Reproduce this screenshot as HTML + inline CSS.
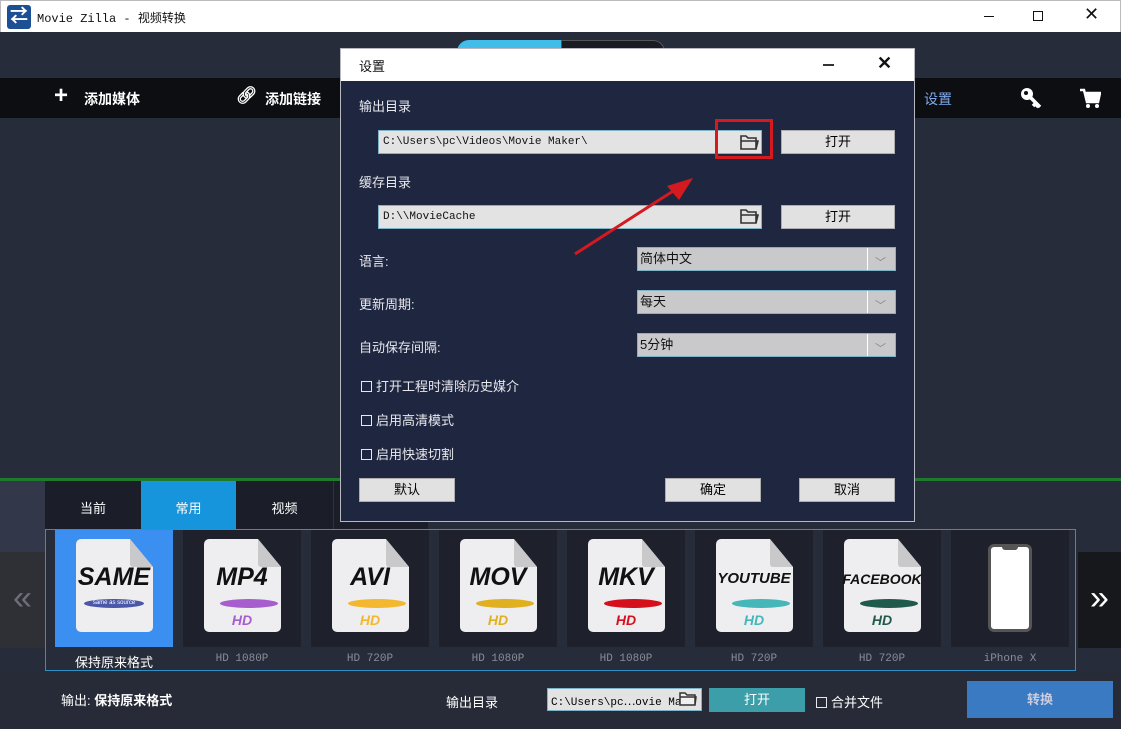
<!DOCTYPE html>
<html><head><meta charset="utf-8"><style>
*{margin:0;padding:0;box-sizing:border-box}
body{width:1121px;height:729px;overflow:hidden;position:relative;background:#272c3b;font-family:"Liberation Sans","Noto Sans CJK SC",sans-serif;font-size:13px}
.abs{position:absolute}
.mono{font-family:"Liberation Mono","Noto Sans CJK SC",monospace}
.title{left:0;top:0;width:1121px;height:32px;background:#fff;border-top:1px solid #bbb;border-left:1px solid #bbb;border-right:1px solid #bbb}
.tb{left:0;top:78px;width:1121px;height:40px;background:#0d0e12;color:#fff;font-weight:bold;font-size:14px}
.card{position:absolute;top:530px;width:118px;height:117px;background:#1e212c}
.doc{position:absolute;left:21px;top:9px;width:77px;height:93px;background:#eeeef0;border-radius:5px;clip-path:polygon(0 0,70% 0,100% 30%,100% 100%,0 100%)}
.fold{position:absolute;left:75px;top:9px;width:23px;height:28px;background:#c9c9cc;clip-path:polygon(0 0,100% 100%,0 100%);border-radius:0 0 0 3px}
.fmt{position:absolute;left:0;width:118px;top:33px;text-align:center;font-weight:bold;font-style:italic;font-size:25px;color:#111;font-family:"Liberation Sans",sans-serif}
.pill{position:absolute;left:37px;top:69px;width:58px;height:9px;border-radius:50%}
.hd{position:absolute;left:0;width:118px;top:82px;text-align:center;font-weight:bold;font-style:italic;font-size:14px}
.lbl{position:absolute;top:653px;width:118px;text-align:center;color:#8a8d96;font-size:11px}
.btn{position:absolute;background:#e1e1e1;border:1px solid #adadad;color:#000;text-align:center;font-size:13px}
.inp{position:absolute;background:#e3e3e3;border:1px solid #7eb4c8;color:#111;font-size:11px;padding-left:4px}
.sel{position:absolute;background:#c9c9cb;border:1px solid #7eb4c8;color:#111;font-size:13px;padding-left:2px}
.sel i{position:absolute;right:27px;top:0;width:1px;height:100%;background:#fff}
.sel b{position:absolute;right:9px;top:4px;color:#888;font-weight:normal;font-size:11px}
.dl{position:absolute;color:#e8e8ee;font-size:13px}
.cb{display:inline-block;width:11px;height:11px;border:1px solid #e8e8e8;margin-right:4px;vertical-align:-1px}
.fold-ic{position:absolute}
</style></head><body>
<div class="abs title">
 <div class="abs" style="left:6px;top:4px;width:24px;height:24px;background:#1d4f95;border-radius:3px;color:#fff;font-size:18px;line-height:22px;text-align:center;font-weight:bold">⇄</div>
 <div class="abs mono" style="left:36px;top:8px;font-size:12px;color:#111">Movie Zilla - 视频转换</div>
 <div class="abs" style="left:983px;top:15px;width:10px;height:1px;background:#111"></div>
 <div class="abs" style="left:1032px;top:10px;width:10px;height:10px;border:1px solid #111"></div>
 <div class="abs" style="left:1083px;top:3px;font-size:18px;color:#111">✕</div>
</div>
<div class="abs" style="left:457px;top:40px;width:104px;height:14px;background:#41bde9;border-radius:12px 0 0 0"></div>
<div class="abs" style="left:561px;top:40px;width:104px;height:14px;background:#1a1c23;border-radius:0 12px 0 0;border:1px solid #555"></div>
<div class="abs tb">
 <div class="abs" style="left:54px;top:6px;font-size:24px;font-weight:bold;line-height:24px">+</div>
 <div class="abs" style="left:84px;top:11px">添加媒体</div>
 <div class="abs" style="left:236px;top:8px;font-size:17px">🔗︎</div>
 <div class="abs" style="left:265px;top:11px">添加链接</div>
 <div class="abs" style="left:924px;top:11px;color:#7fa8e8;font-weight:normal">设置</div>
 <svg class="abs" style="left:1019px;top:8px" width="24" height="24" viewBox="0 0 24 24"><circle cx="8" cy="8" r="6" fill="#fff"/><circle cx="7" cy="7" r="2" fill="#0d0e12"/><path d="M11 11 L21 21 M17 17 L14 20 M19 19 L17 21" stroke="#fff" stroke-width="3.5"/></svg>
 <svg class="abs" style="left:1079px;top:9px" width="22" height="22" viewBox="0 0 22 22"><path d="M1 3 H5 L8 15 H19 L21 6 H6" fill="none" stroke="#fff" stroke-width="2.5"/><path d="M7 7 H20 L18 14 H9Z" fill="#fff"/><circle cx="9" cy="19" r="2" fill="#fff"/><circle cx="18" cy="19" r="2" fill="#fff"/></svg>
</div>
<div class="abs" style="left:0;top:478px;width:1121px;height:3px;background:#1f7a2e"></div>
<div class="abs" style="left:0;top:481px;width:45px;height:72px;background:#323849"></div>
<div class="abs" style="left:45px;top:481px;width:96px;height:49px;background:#1b1e28;color:#fff;text-align:center;line-height:56px">当前</div>
<div class="abs" style="left:141px;top:481px;width:95px;height:49px;background:#1695dd;color:#fff;text-align:center;line-height:56px">常用</div>
<div class="abs" style="left:236px;top:481px;width:97px;height:49px;background:#1b1e28;color:#fff;text-align:center;line-height:56px">视频</div>
<div class="abs" style="left:333px;top:481px;width:95px;height:49px;background:#1b1e28;border-left:1px solid #333"></div>
<div class="abs" style="left:0;top:552px;width:45px;height:96px;background:#2f3036;color:#6c6f78;font-size:34px;text-align:center;line-height:92px">«</div>
<div class="abs" style="left:1078px;top:552px;width:43px;height:96px;background:#17181c;color:#fff;font-size:34px;text-align:center;line-height:92px">»</div>
<div class="abs" style="left:45px;top:529px;width:1031px;height:142px;border:1px solid #2f8fc7"></div>

<div class="card" style="left:55px;background:#3b8ff0"><div class="doc"></div><div class="fold"></div><div class="fmt">SAME</div><div class="pill" style="background:#4b57a8;left:29px;width:60px"></div><div class="abs" style="left:0;width:118px;top:70px;font-size:6px;color:#fff;text-align:center">same as source</div></div>
<div class="card" style="left:183px"><div class="doc"></div><div class="fold"></div><div class="fmt">MP4</div><div class="pill" style="background:#a65ecf"></div><div class="hd" style="color:#a65ecf">HD</div></div>
<div class="card" style="left:311px"><div class="doc"></div><div class="fold"></div><div class="fmt">AVI</div><div class="pill" style="background:#f3b82f"></div><div class="hd" style="color:#f3b82f">HD</div></div>
<div class="card" style="left:439px"><div class="doc"></div><div class="fold"></div><div class="fmt">MOV</div><div class="pill" style="background:#e0b020"></div><div class="hd" style="color:#e0b020">HD</div></div>
<div class="card" style="left:567px"><div class="doc"></div><div class="fold"></div><div class="fmt">MKV</div><div class="pill" style="background:#d5101d"></div><div class="hd" style="color:#d5101d">HD</div></div>
<div class="card" style="left:695px"><div class="doc"></div><div class="fold"></div><div class="fmt" style="font-size:15px;top:40px">YOUTUBE</div><div class="pill" style="background:#45b7b9"></div><div class="hd" style="color:#45b7b9">HD</div></div>
<div class="card" style="left:823px"><div class="doc"></div><div class="fold"></div><div class="fmt" style="font-size:14px;top:41px">FACEBOOK</div><div class="pill" style="background:#1f5a4c"></div><div class="hd" style="color:#1f5a4c">HD</div></div>
<div class="card" style="left:951px"><div class="abs" style="left:37px;top:14px;width:44px;height:88px;background:#fff;border:3px solid #555;border-radius:6px"></div><div class="abs" style="left:51px;top:16px;width:16px;height:4px;background:#555;border-radius:0 0 3px 3px"></div></div>

<div class="lbl" style="left:55px;color:#fff;font-size:13px;top:652px">保持原来格式</div>
<div class="lbl mono" style="left:183px">HD 1080P</div>
<div class="lbl mono" style="left:311px">HD 720P</div>
<div class="lbl mono" style="left:439px">HD 1080P</div>
<div class="lbl mono" style="left:567px">HD 1080P</div>
<div class="lbl mono" style="left:695px">HD 720P</div>
<div class="lbl mono" style="left:823px">HD 720P</div>
<div class="lbl mono" style="left:951px">iPhone X</div>

<div class="abs" style="left:0;top:671px;width:1121px;height:58px;background:#272b37"></div>
<div class="abs" style="left:61px;top:690px;color:#fff">输出: <b>保持原来格式</b></div>
<div class="abs" style="left:446px;top:692px;color:#fff">输出目录</div>
<div class="abs mono" style="left:547px;top:688px;width:155px;height:23px;background:#e3e3e3;border:1px solid #7eb4c8;font-size:11px;padding:4px 3px;white-space:nowrap;overflow:hidden">C:\Users\pc⋯ovie Mak</div>
<svg class="fold-ic" style="left:679px;top:691px" width="18" height="15" viewBox="0 0 18 15"><path d="M1 2 H6 L8 4 H16 V14 H1Z M1 6 H17 L16 14" fill="#f0f0f0" stroke="#333" stroke-width="1.5"/></svg>
<div class="abs" style="left:709px;top:688px;width:96px;height:24px;background:#3b9ea8;color:#fff;text-align:center;line-height:24px">打开</div>
<div class="abs" style="left:816px;top:692px;color:#fff"><span class="cb"></span>合并文件</div>
<div class="abs" style="left:967px;top:681px;width:146px;height:37px;background:#3a7ac2;color:#ccd;text-align:center;line-height:37px;font-weight:bold">转换</div>

<!-- dialog -->
<div class="abs" style="left:340px;top:48px;width:575px;height:474px;background:#1f2740;border:1px solid #b8b8c0">
 <div class="abs" style="left:0;top:0;width:573px;height:32px;background:#fff">
  <div class="abs" style="left:18px;top:7px;color:#111">设置</div>
  <div class="abs" style="left:482px;top:15px;width:11px;height:2px;background:#333"></div>
  <div class="abs" style="left:536px;top:4px;font-size:18px;color:#111;font-weight:bold">✕</div>
 </div>
 <div class="dl" style="left:18px;top:47px">输出目录</div>
 <div class="inp mono" style="left:37px;top:81px;width:384px;height:24px;line-height:22px">C:\Users\pc\Videos\Movie Maker\</div>
 <svg class="fold-ic" style="left:399px;top:85px" width="19" height="16" viewBox="0 0 19 16"><path d="M1 2 H6 L8 4 H16 V15 H1Z M1 7 H18 L16 15" fill="none" stroke="#333" stroke-width="1.6"/></svg>
 <div class="abs" style="left:374px;top:70px;width:58px;height:40px;border:3px solid #d41a1f"></div>
 <div class="btn" style="left:440px;top:81px;width:114px;height:24px;line-height:22px">打开</div>
 <div class="dl" style="left:18px;top:123px">缓存目录</div>
 <div class="inp mono" style="left:37px;top:156px;width:384px;height:24px;line-height:22px">D:\\MovieCache</div>
 <svg class="fold-ic" style="left:399px;top:159px" width="19" height="16" viewBox="0 0 19 16"><path d="M1 2 H6 L8 4 H16 V15 H1Z M1 7 H18 L16 15" fill="none" stroke="#333" stroke-width="1.6"/></svg>
 <div class="btn" style="left:440px;top:156px;width:114px;height:24px;line-height:22px">打开</div>
 <svg class="abs" style="left:230px;top:125px" width="130" height="85"><line x1="4" y1="80" x2="110" y2="12" stroke="#d41a1f" stroke-width="3"/><path d="M122 4 L96 12 L108 26Z" fill="#d41a1f"/></svg>
 <div class="dl" style="left:18px;top:202px">语言:</div>
 <div class="sel" style="left:296px;top:198px;width:259px;height:24px;line-height:22px">简体中文<i></i><b>﹀</b></div>
 <div class="dl" style="left:18px;top:245px">更新周期:</div>
 <div class="sel" style="left:296px;top:241px;width:259px;height:24px;line-height:22px">每天<i></i><b>﹀</b></div>
 <div class="dl" style="left:18px;top:288px">自动保存间隔:</div>
 <div class="sel" style="left:296px;top:284px;width:259px;height:24px;line-height:22px">5分钟<i></i><b>﹀</b></div>
 <div class="dl" style="left:20px;top:327px"><span class="cb"></span>打开工程时清除历史媒介</div>
 <div class="dl" style="left:20px;top:361px"><span class="cb"></span>启用高清模式</div>
 <div class="dl" style="left:20px;top:395px"><span class="cb"></span>启用快速切割</div>
 <div class="btn" style="left:18px;top:429px;width:96px;height:24px;line-height:22px">默认</div>
 <div class="btn" style="left:324px;top:429px;width:96px;height:24px;line-height:22px">确定</div>
 <div class="btn" style="left:458px;top:429px;width:96px;height:24px;line-height:22px">取消</div>
</div>
</body></html>
